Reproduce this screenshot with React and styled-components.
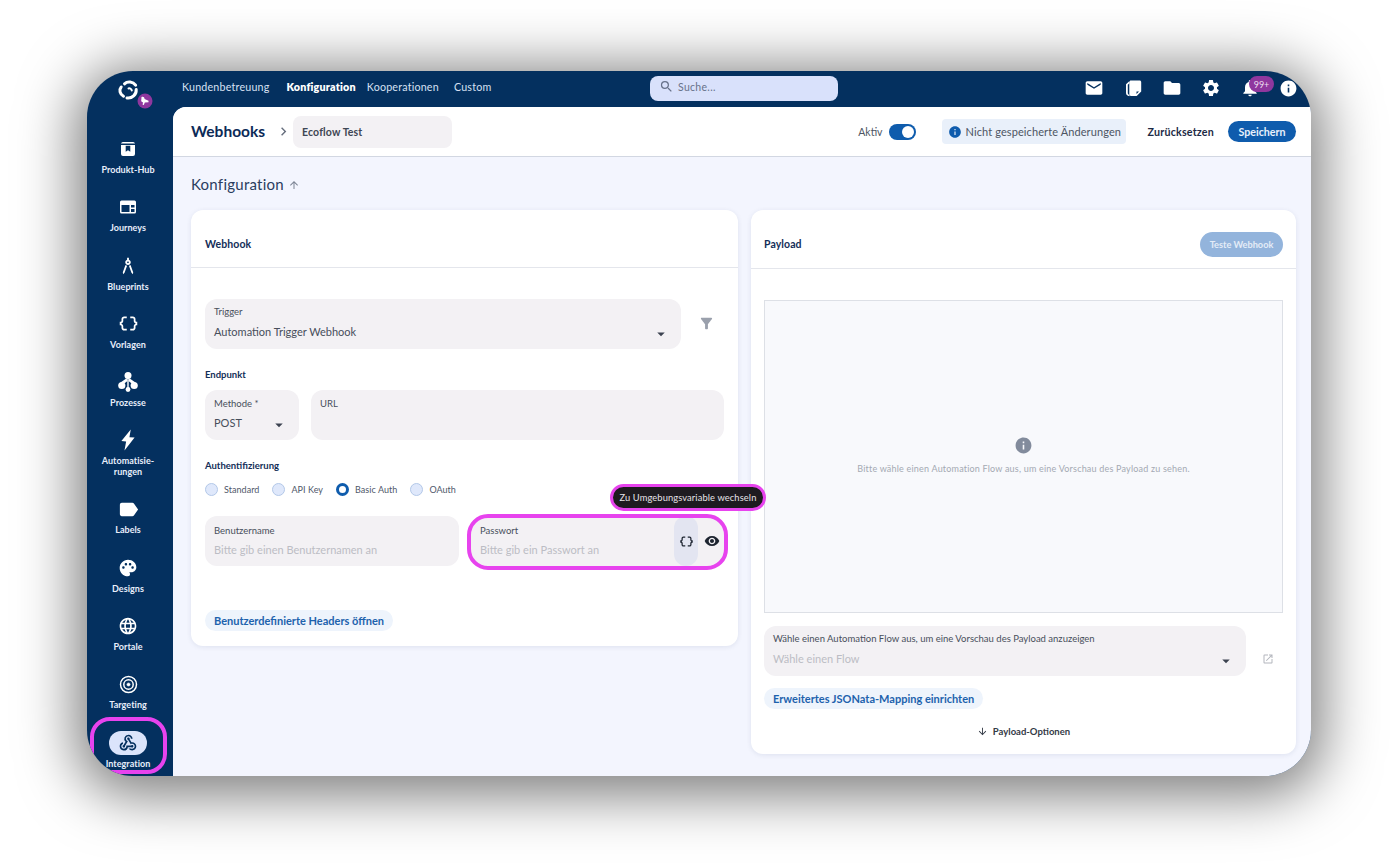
import React from 'react';
import styled, { createGlobalStyle } from 'styled-components';
import {
  MdArchitecture, MdArrowDownward, MdArrowDropDown, MdArrowUpward, MdChevronRight, MdDataObject,
  MdEmail, MdFilterAlt, MdFolder, MdInfo, MdLabel, MdLanguage, MdNotifications, MdOpenInNew, MdPalette,
  MdSearch, MdSettings, MdVisibility, MdWebhook,
} from 'react-icons/md';

const GlobalStyle = createGlobalStyle`
  html, body { margin: 0; padding: 0; background: #fff; }
  body { font-family: 'Lato', 'Open Sans', sans-serif; color: #0c2a57; }
  * { box-sizing: border-box; }
`;

const Page = styled.div`
  width: 1398px;
  height: 864px;
  padding: 71px 87px 88px;
  overflow: hidden;
`;

const Window = styled.div`
  display: flex;
  width: 1224px;
  height: 705px;
  border-radius: 46px;
  overflow: hidden;
  background: #04305f;
  box-shadow: 0 8px 55px 12px rgba(0, 0, 0, 0.5);
`;

const Sidebar = styled.nav`
  flex: 0 0 86px;
  display: flex;
  flex-direction: column;
  align-items: center;
  padding-right: 4px;
`;

const LogoWrap = styled.div`
  height: 66px;
  width: 100%;
  flex-shrink: 0;
  display: flex;
  justify-content: center;
  padding: 9px 0 0 14px;
`;

const NavItem = styled.div`
  position: relative;
  width: 100%;
  height: ${p => (p.$tall ? 69 : 58.3)}px;
  display: flex;
  flex-direction: column;
  align-items: center;
  flex-shrink: 0;
  color: #fff;
`;

const NavIcon = styled.div`
  width: 38px;
  height: 24px;
  border-radius: 12px;
  display: flex;
  align-items: center;
  justify-content: center;
  background: ${p => (p.$active ? '#dbe4fb' : 'transparent')};
  color: ${p => (p.$active ? '#04305f' : '#fff')};
`;

const NavLabel = styled.div`
  margin-top: 3px;
  font-size: 9px;
  font-weight: 700;
  line-height: 11px;
  letter-spacing: 0.05px;
  text-align: center;
  color: #e8eefb;
`;

const Highlight = styled.div`
  position: absolute;
  top: ${p => p.$top}px;
  left: ${p => p.$left}px;
  right: ${p => p.$right}px;
  bottom: ${p => p.$bottom}px;
  border: 4px solid #e743ee;
  border-radius: ${p => p.$radius}px;
  pointer-events: none;
`;

const Content = styled.div`
  flex: 1;
  min-width: 0;
  display: flex;
  flex-direction: column;
`;

const TopBar = styled.header`
  height: 36px;
  flex-shrink: 0;
  display: flex;
  align-items: center;
  padding: 0 13px 5px 9px;
`;

const TopNav = styled.div`
  display: flex;
  gap: 15px;
  width: 468px;
`;

const TopLink = styled.span`
  font-size: 10.7px;
  letter-spacing: 0.2px;
  font-weight: ${p => (p.$active ? 800 : 400)};
  color: ${p => (p.$active ? '#fff' : '#d7e0f3')};
  margin: ${p => (p.$active ? '0 -4px 0 2px' : '0')};
`;

const Search = styled.div`
  width: 188px;
  height: 25px;
  border-radius: 8px;
  background: #d9e1fb;
  display: flex;
  align-items: center;
  gap: 4px;
  padding: 0 9px 3px;
  margin-top: 3px;
  font-size: 10.5px;
  letter-spacing: 0.3px;
  color: #68728a;
`;

const TopIcons = styled.div`
  margin-left: auto;
  margin-top: 3px;
  display: flex;
  align-items: center;
  gap: 19px;
  color: #fff;
`;

const BellWrap = styled.div`
  position: relative;
  display: flex;
`;

const Badge = styled.span`
  position: absolute;
  top: -2px;
  left: 9px;
  width: 25px;
  height: 16px;
  border-radius: 8px;
  background: #8f379e;
  color: #eddff0;
  font-size: 9px;
  display: flex;
  align-items: center;
  justify-content: center;
`;

const Surface = styled.div`
  flex: 1;
  display: flex;
  flex-direction: column;
  background: #f3f5fe;
  border-top-left-radius: 13px;
  min-height: 0;
`;

const Header = styled.div`
  height: 50px;
  flex-shrink: 0;
  display: flex;
  align-items: center;
  padding: 0 15px 0 18px;
  background: #fff;
  border-top-left-radius: 13px;
  border-bottom: 1px solid #d2d7e2;
`;

const PageTitle = styled.h1`
  margin: 0 0 2px;
  width: 84px;
  font-size: 15.5px;
  font-weight: 700;
  color: #0c2a57;
`;

const Crumb = styled.div`
  display: flex;
  color: #68707f;
  width: 18px;
`;

const NameInput = styled.div`
  width: 159px;
  height: 32px;
  border-radius: 8px;
  background: #f3f1f4;
  display: flex;
  align-items: center;
  padding: 0 9px;
  font-size: 10.5px;
  font-weight: 700;
  letter-spacing: 0.15px;
  color: #3e4653;
`;

const HeaderRight = styled.div`
  margin-left: auto;
  display: flex;
  align-items: center;
`;

const ActiveLabel = styled.span`
  font-size: 10.5px;
  color: #4d5563;
  margin-right: 6px;
`;

const Toggle = styled.span`
  width: 27px;
  height: 16px;
  border-radius: 8px;
  background: #0f5cad;
  display: flex;
  align-items: center;
  justify-content: flex-end;
  padding-right: 2px;
  margin-right: 26px;

  &::after {
    content: '';
    width: 12px;
    height: 12px;
    border-radius: 50%;
    background: #fff;
  }
`;

const Notice = styled.div`
  width: 184px;
  height: 25px;
  border-radius: 4px;
  background: #e9f0fa;
  display: flex;
  align-items: center;
  gap: 4px;
  padding-left: 6px;
  margin-right: 22px;
  font-size: 11px;
  letter-spacing: 0.1px;
  color: #4d5563;
  white-space: nowrap;
`;

const ResetButton = styled.span`
  font-size: 10.7px;
  font-weight: 700;
  letter-spacing: 0.2px;
  color: #1c2a45;
  margin-right: 14px;
`;

const SaveButton = styled.span`
  width: 68px;
  height: 21px;
  border-radius: 11px;
  background: #0f5cad;
  color: #e9f1fc;
  font-size: 10.7px;
  font-weight: 700;
  display: flex;
  align-items: center;
  justify-content: center;
`;

const Main = styled.main`
  flex: 1;
  padding: 18px 15px 0 18px;
  min-height: 0;
`;

const SectionTitle = styled.div`
  display: flex;
  align-items: center;
  gap: 4px;
  height: 18px;
  font-size: 15px;
  letter-spacing: 0.25px;
  color: #2a3d5e;
  svg { color: #7d8595; margin-top: 2px; }
`;

const Columns = styled.div`
  display: grid;
  grid-template-columns: 547px 545px;
  gap: 13px;
  align-items: start;
  margin-top: 17px;
`;

const Card = styled.section`
  height: ${p => p.$height}px;
  background: #fff;
  border-radius: 12px;
  box-shadow: 0 1px 5px rgba(40, 60, 110, 0.1);
`;

const CardHead = styled.div`
  height: ${p => p.$height}px;
  border-bottom: 1px solid #e4e6ec;
  display: flex;
  align-items: center;
  justify-content: space-between;
  padding: 11px 13px 0 ${p => p.$x}px;
`;

const CardTitle = styled.span`
  font-size: 10.5px;
  font-weight: 700;
  letter-spacing: 0.1px;
  color: #132e58;
  margin-bottom: ${p => p.$lift || 0}px;
`;

const TestButton = styled.span`
  width: 83px;
  height: 25px;
  margin-top: -1px;
  border-radius: 13px;
  background: #93b4dc;
  color: #e4ecf7;
  font-size: 9.2px;
  font-weight: 700;
  display: flex;
  align-items: center;
  justify-content: center;
`;

const CardBody = styled.div`
  padding: ${p => p.$top}px ${p => p.$x}px 0;
`;

const Row = styled.div`
  display: flex;
  gap: ${p => p.$gap}px;
  align-items: center;
  margin-top: ${p => p.$top || 0}px;
`;

const Field = styled.div`
  position: relative;
  flex: ${p => (p.$width ? `0 0 ${p.$width}px` : 1)};
  height: 50px;
  border-radius: 12px;
  background: #f3f1f4;
  padding: ${p => p.$pad || 7}px 9px 0;
  min-width: 0;
`;

const FieldLabel = styled.div`
  font-size: 9.5px;
  line-height: 12px;
  color: #484f5b;
`;

const FieldValue = styled.div`
  margin-top: ${p => p.$gap || 7}px;
  font-size: 11px;
  line-height: 14px;
  color: ${p => (p.$placeholder ? '#bcbdc4' : '#474e5b')};
`;

const Caret = styled.div`
  position: absolute;
  right: 11px;
  bottom: 6px;
  display: flex;
  color: #3c4350;
`;

const SideIcon = styled.div`
  flex: 0 0 ${p => p.$width}px;
  display: flex;
  justify-content: center;
  color: ${p => p.$color};
  margin-top: ${p => p.$shift}px;
`;

const GroupLabel = styled.div`
  margin: 20px 0 9px;
  font-size: 9.5px;
  line-height: 12px;
  font-weight: 700;
  color: #132e58;
`;

const RadioRow = styled.div`
  display: flex;
  gap: 13px;
  height: 16px;
  align-items: center;
  margin-bottom: 19px;
`;

const RadioItem = styled.label`
  display: flex;
  align-items: center;
  gap: 6px;
  font-size: 9px;
  letter-spacing: 0.05px;
  color: #50586a;
`;

const RadioDot = styled.span`
  width: 13px;
  height: 13px;
  border-radius: 50%;
  background: ${p => (p.$checked ? '#fff' : '#dfe8fb')};
  border: ${p => (p.$checked ? '3.5px solid #0f5cad' : '1px solid #b3c8e8')};
`;

const EnvToggle = styled.div`
  position: absolute;
  top: 0;
  right: 26px;
  bottom: 0;
  width: 24px;
  border-radius: 12px;
  background: #e3e5f1;
  display: flex;
  align-items: center;
  justify-content: center;
  color: #1d2430;
`;

const EyeIcon = styled.div`
  position: absolute;
  top: 17px;
  right: 4px;
  display: flex;
  color: #1d2430;
`;

const Tooltip = styled.div`
  position: absolute;
  top: -32px;
  right: -42px;
  width: 156px;
  height: 27px;
  border: 3px solid #e743ee;
  border-radius: 14px;
  background: #1e1b20;
  color: #e6e4e8;
  font-size: 9.3px;
  letter-spacing: 0.12px;
  display: flex;
  align-items: center;
  justify-content: center;
  white-space: nowrap;
`;

const LinkButton = styled.div`
  display: inline-flex;
  align-items: center;
  height: 21px;
  padding: 0 9px;
  border-radius: 11px;
  background: #eef4fc;
  color: #1d62ad;
  font-size: 11px;
  font-weight: 700;
  margin-top: ${p => p.$top}px;
`;

const Preview = styled.div`
  height: 313px;
  border: 1px solid #dde0e6;
  background: #f8f9fc;
  display: flex;
  flex-direction: column;
  align-items: center;
  padding-top: 135px;
  gap: 8px;
  font-size: 9px;
  letter-spacing: 0.2px;
  color: #a4a9b3;
  svg { color: #828b9c; }
`;

const PayloadOptions = styled.div`
  margin-top: 17px;
  display: flex;
  align-items: center;
  justify-content: center;
  gap: 5px;
  font-size: 9.5px;
  font-weight: 700;
  color: #333a46;
`;

const Logo = () => (
  <svg width="36" height="30" viewBox="0 0 36 30">
    <g fill="none" stroke="#fff" strokeLinecap="round">
      <path d="M7.500 3.800C10.500 .9 16 1.500 18.600 5.200" strokeWidth="3" />
      <path d="M19.200 9.500C19.600 14.500 15 18.800 10 18" strokeWidth="3" />
      <path d="M6.500 16.300C2.800 14.200 1.800 9.800 4.200 7" strokeWidth="3" />
      <path d="M11.500 8.500C13 8 14.500 9 14.800 10.500" strokeWidth="2" />
    </g>
    <circle cx="28" cy="21" r="7.500" fill="#8f379e" />
    <path d="M24.500 17c1.700-.7 2.900 0 3.100 2l3.900 1.800v1.500l-3.700.3-1 2.400-1.200-.3.4-2.300-1.800-1.100z" fill="#fff" />
  </svg>
);

const ProductIcon = () => (
  <svg width="18" height="18" viewBox="0 0 18 18" fill="#fff">
    <path fillRule="evenodd" d="M4 2h10a2 2 0 0 1 2 1.600H2A2 2 0 0 1 4 2zM2 5h14v9a2 2 0 0 1-2 2H4a2 2 0 0 1-2-2zm4.700.8v6l2.300-1.500 2.300 1.500v-6z" />
  </svg>
);

const JourneyIcon = () => (
  <svg width="18" height="18" viewBox="0 0 18 18" fill="#fff">
    <path fillRule="evenodd" d="M2.500 2.500h13A1.500 1.500 0 0 1 17 4v10a1.500 1.500 0 0 1-1.500 1.500h-13A1.500 1.500 0 0 1 1 14V4a1.500 1.500 0 0 1 1.500-1.500zM2.500 7v7h8V7zm9.500 0v2.500h3.500V7zm0 4v3h3.500v-3z" />
  </svg>
);

const ProcessIcon = () => (
  <svg width="22" height="22" viewBox="0 0 22 22" fill="#fff">
    <circle cx="11" cy="4.500" r="3.500" />
    <circle cx="4.800" cy="14.500" r="3.600" />
    <circle cx="17.200" cy="14.500" r="3.600" />
    <circle cx="11" cy="18.500" r="2.400" />
    <path d="M10.300 7h1.400v10h-1.400z" />
    <path d="M9.600 7.200 3.500 11.500l2.500 2 4.500-3.500zM12.400 7.200l6.100 4.300-2.500 2-4.500-3.500z" />
  </svg>
);

const BoltIcon = () => (
  <svg width="18" height="22" viewBox="0 0 16 20" fill="#fff">
    <path d="M10.500 0.500 2 11l4.300.4L4.800 19.500 14 7.800l-4.700-.2z" />
  </svg>
);

const TargetIcon = () => (
  <svg width="19" height="19" viewBox="0 0 19 19" fill="none" stroke="#fff">
    <circle cx="9.500" cy="9.500" r="8" strokeWidth="1.500" />
    <circle cx="9.500" cy="9.500" r="4.700" strokeWidth="1.500" />
    <circle cx="9.500" cy="9.500" r="1.600" fill="#fff" strokeWidth="0.500" />
  </svg>
);

const CopyIcon = () => (
  <svg width="20" height="20" viewBox="0 0 20 20" fill="#fff">
    <path d="M3 6.200 6 3.500 6.700 5 4.800 6.700V15c0 1 .7 1.800 1.800 2l-.3 1.200C4.200 17.900 3 16.600 3 15z" />
    <path fillRule="evenodd" d="M8 2.500h8.500c1 0 1.700.7 1.700 1.700v9.300L13.700 18H8c-1 0-1.700-.7-1.700-1.700V4.200c0-1 .7-1.700 1.700-1.700zM13.500 13.500v2.500l2.500-2.500z" />
  </svg>
);

const navItems = [
  { label: 'Produkt-Hub', icon: <ProductIcon /> },
  { label: 'Journeys', icon: <JourneyIcon /> },
  { label: 'Blueprints', icon: <MdArchitecture size={22} /> },
  { label: 'Vorlagen', icon: <MdDataObject size={21} /> },
  { label: 'Prozesse', icon: <ProcessIcon /> },
  { label: <>Automatisie-<br />rungen</>, icon: <BoltIcon />, tall: true },
  { label: 'Labels', icon: <MdLabel size={23} /> },
  { label: 'Designs', icon: <MdPalette size={20} /> },
  { label: 'Portale', icon: <MdLanguage size={20} /> },
  { label: 'Targeting', icon: <TargetIcon /> },
  { label: 'Integration', icon: <MdWebhook size={20} />, active: true },
];

const radios = ['Standard', 'API Key', 'Basic Auth', 'OAuth'];

export default function App() {
  return (
    <Page>
      <GlobalStyle />
      <Window>
        <Sidebar>
          <LogoWrap><Logo /></LogoWrap>
          {navItems.map((item, i) => (
            <NavItem key={i} $tall={item.tall}>
              <NavIcon $active={item.active}>{item.icon}</NavIcon>
              <NavLabel>{item.label}</NavLabel>
              {item.active && <Highlight $top={-14} $left={3} $right={2} $bottom={15} $radius={20} />}
            </NavItem>
          ))}
        </Sidebar>
        <Content>
          <TopBar>
            <TopNav>
              <TopLink>Kundenbetreuung</TopLink>
              <TopLink $active>Konfiguration</TopLink>
              <TopLink>Kooperationen</TopLink>
              <TopLink>Custom</TopLink>
            </TopNav>
            <Search><MdSearch size={15} />Suche...</Search>
            <TopIcons>
              <MdEmail size={20} />
              <CopyIcon />
              <MdFolder size={20} />
              <MdSettings size={20} />
              <BellWrap>
                <MdNotifications size={20} />
                <Badge>99+</Badge>
              </BellWrap>
              <MdInfo size={19} />
            </TopIcons>
          </TopBar>
          <Surface>
            <Header>
              <PageTitle>Webhooks</PageTitle>
              <Crumb><MdChevronRight size={17} /></Crumb>
              <NameInput>Ecoflow Test</NameInput>
              <HeaderRight>
                <ActiveLabel>Aktiv</ActiveLabel>
                <Toggle />
                <Notice><MdInfo size={14} color="#0f5cad" />Nicht gespeicherte Änderungen</Notice>
                <ResetButton>Zurücksetzen</ResetButton>
                <SaveButton>Speichern</SaveButton>
              </HeaderRight>
            </Header>
            <Main>
              <SectionTitle>Konfiguration <MdArrowUpward size={12} /></SectionTitle>
              <Columns>
                <Card $height={436}>
                  <CardHead $height={58} $x={14}><CardTitle>Webhook</CardTitle></CardHead>
                  <CardBody $top={31} $x={14}>
                    <Row $gap={0}>
                      <Field $width={476}>
                        <FieldLabel>Trigger</FieldLabel>
                        <FieldValue>Automation Trigger Webhook</FieldValue>
                        <Caret><MdArrowDropDown size={18} /></Caret>
                      </Field>
                      <SideIcon $width={50} $color="#9aa0ac" $shift={-2}><MdFilterAlt size={17} /></SideIcon>
                    </Row>
                    <GroupLabel>Endpunkt</GroupLabel>
                    <Row $gap={12}>
                      <Field $width={94} $pad={8}>
                        <FieldLabel>Methode *</FieldLabel>
                        <FieldValue $gap={6}>POST</FieldValue>
                        <Caret><MdArrowDropDown size={18} /></Caret>
                      </Field>
                      <Field $pad={8}><FieldLabel>URL</FieldLabel></Field>
                    </Row>
                    <GroupLabel>Authentifizierung</GroupLabel>
                    <RadioRow>
                      {radios.map(r => (
                        <RadioItem key={r}><RadioDot $checked={r === 'Basic Auth'} />{r}</RadioItem>
                      ))}
                    </RadioRow>
                    <Row $gap={12}>
                      <Field $width={254} $pad={9}>
                        <FieldLabel>Benutzername</FieldLabel>
                        <FieldValue $gap={6} $placeholder>Bitte gib einen Benutzernamen an</FieldValue>
                      </Field>
                      <Field $pad={9}>
                        <FieldLabel>Passwort</FieldLabel>
                        <FieldValue $gap={6} $placeholder>Bitte gib ein Passwort an</FieldValue>
                        <EnvToggle><MdDataObject size={15} /></EnvToggle>
                        <EyeIcon><MdVisibility size={16} /></EyeIcon>
                        <Highlight $top={-2} $left={-4} $right={-4} $bottom={-4} $radius={21} />
                        <Tooltip>Zu Umgebungsvariable wechseln</Tooltip>
                      </Field>
                    </Row>
                    <LinkButton $top={44}>Benutzerdefinierte Headers öffnen</LinkButton>
                  </CardBody>
                </Card>
                <Card $height={544}>
                  <CardHead $height={59} $x={13}><CardTitle $lift={2}>Payload</CardTitle><TestButton>Teste Webhook</TestButton></CardHead>
                  <CardBody $top={31} $x={13}>
                    <Preview>
                      <MdInfo size={19} />
                      Bitte wähle einen Automation Flow aus, um eine Vorschau des Payload zu sehen.
                    </Preview>
                    <Row $gap={0} $top={13}>
                      <Field $width={482}>
                        <FieldLabel>Wähle einen Automation Flow aus, um eine Vorschau des Payload anzuzeigen</FieldLabel>
                        <FieldValue $placeholder>Wähle einen Flow</FieldValue>
                        <Caret><MdArrowDropDown size={18} /></Caret>
                      </Field>
                      <SideIcon $width={44} $color="#b3b6bd" $shift={16}><MdOpenInNew size={12} /></SideIcon>
                    </Row>
                    <LinkButton $top={12}>Erweitertes JSONata-Mapping einrichten</LinkButton>
                    <PayloadOptions><MdArrowDownward size={11} />Payload-Optionen</PayloadOptions>
                  </CardBody>
                </Card>
              </Columns>
            </Main>
          </Surface>
        </Content>
      </Window>
    </Page>
  );
}
